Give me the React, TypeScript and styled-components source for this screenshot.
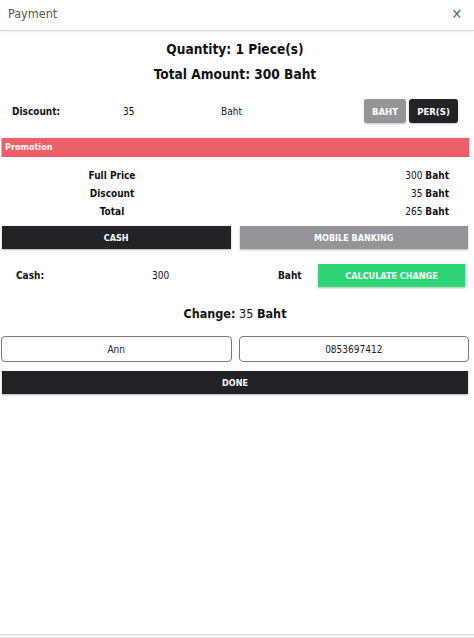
import React from 'react';
import styled, {createGlobalStyle} from 'styled-components';

// ==================== 全局样式 ====================

const GlobalStyle = createGlobalStyle`
  html, body {
    margin: 0;
    padding: 0;
    background: #ffffff;
  }
  body {
    font-family: "DejaVu Sans Condensed", "DejaVu Sans", sans-serif;
    color: #111;
  }
  * { box-sizing: border-box; }
`;

// ==================== 样式组件 ====================

const Modal = styled.div`
  display: flex;
  flex-direction: column;
  width: 474px;
  height: 638px;
  background: #fff;
`;

const Header = styled.div`
  display: flex;
  align-items: center;
  justify-content: space-between;
  height: 31px;
  padding: 0 12px 3px 8px;
  border-bottom: 1px solid #dcdcdc;
  box-shadow: 0 1px 2px rgba(0, 0, 0, 0.08);
`;

const HeaderTitle = styled.span`
  font-size: 12.5px;
  color: #555;
`;

const CloseButton = styled.span`
  font-size: 14px;
  font-weight: bold;
  color: #666;
  cursor: pointer;
`;

const Body = styled.div`
  flex: 1;
  display: flex;
  flex-direction: column;
  padding: 8px 5px 0 1px;
`;

const Heading = styled.div<{ $mt?: number }>`
  text-align: center;
  font-size: 13.6px;
  font-weight: bold;
  line-height: 20px;
  margin-top: ${p => p.$mt ?? 0}px;
`;

const DiscountRow = styled.div`
  display: grid;
  grid-template-columns: 111px 98px 1fr auto;
  align-items: center;
  margin-top: 15px;
  padding: 0 11px 0 11px;
  font-size: 10px;
`;

const Label = styled.span`
  font-weight: bold;
`;

const ToggleGroup = styled.div`
  display: flex;
  gap: 3px;
`;

const ToggleButton = styled.button<{ $active?: boolean; $w: number }>`
  width: ${p => p.$w}px;
  height: 24px;
  padding: 0;
  border: none;
  border-radius: 3px;
  font-family: inherit;
  font-size: 9.5px;
  font-weight: bold;
  color: #fff;
  background: ${p => p.$active ? '#222326' : '#939599'};
  box-shadow: 0 1px 2px rgba(0, 0, 0, 0.25);
`;

const PromotionBar = styled.div`
  margin-top: 15px;
  height: 19px;
  line-height: 19px;
  padding-left: 3px;
  background: #ee6068;
  color: #fff;
  font-size: 9px;
  font-weight: bold;
  border-left: 1px solid #f4a0a5;
`;

const SummaryTable = styled.div`
  display: grid;
  grid-template-columns: 222px 1fr;
  margin-top: 10px;
  padding-right: 20px;
  font-size: 10px;
  line-height: 18px;
`;

const SummaryLabel = styled.span`
  text-align: center;
  font-weight: bold;
`;

const SummaryValue = styled.span`
  text-align: right;
`;

const Unit = styled.b`
  font-weight: bold;
`;

const MethodRow = styled.div`
  display: grid;
  grid-template-columns: 1fr 1fr;
  column-gap: 9px;
  margin-top: 5px;
  padding: 0 1px 0 1px;
`;

const BlockButton = styled.button<{ $tone: 'dark' | 'gray' | 'green' }>`
  height: 23px;
  border: none;
  border-radius: 0;
  font-family: inherit;
  font-size: 9px;
  font-weight: bold;
  color: #fff;
  background: ${p => p.$tone === 'dark' ? '#222326' : p.$tone === 'gray' ? '#939599' : '#2ed574'};
  box-shadow: 0 1px 2px rgba(0, 0, 0, 0.3);
`;

const CashRow = styled.div`
  display: grid;
  grid-template-columns: 136px 126px 40px 1fr;
  align-items: center;
  margin-top: 15px;
  padding: 0 4px 0 15px;
  font-size: 10px;
`;

const ChangeLine = styled.div`
  text-align: center;
  font-size: 12.5px;
  margin-top: 19px;
`;

const InputRow = styled.div`
  display: grid;
  grid-template-columns: 1fr 1fr;
  column-gap: 7px;
  margin-top: 15px;
`;

const TextInput = styled.input`
  height: 26px;
  width: 100%;
  border: 1px solid #777;
  border-radius: 4px;
  text-align: center;
  font-family: inherit;
  font-size: 10px;
  color: #222;
  outline: none;
`;

const DoneButton = styled(BlockButton)`
  margin: 9px 1px 0 1px;
`;

const Footer = styled.div`
  height: 4px;
  border-top: 1px solid #dcdcdc;
  background: #f4f4f4;
`;

// ==================== 主组件 ====================

const App: React.FC = () => {
    return (
        <>
            <GlobalStyle/>
            <Modal>
                <Header>
                    <HeaderTitle>Payment</HeaderTitle>
                    <CloseButton>✕</CloseButton>
                </Header>
                <Body>
                    <Heading>Quantity: 1 Piece(s)</Heading>
                    <Heading $mt={5}>Total Amount: 300 Baht</Heading>

                    <DiscountRow>
                        <Label>Discount:</Label>
                        <span>35</span>
                        <span>Baht</span>
                        <ToggleGroup>
                            <ToggleButton $w={42}>BAHT</ToggleButton>
                            <ToggleButton $w={49} $active>PER(S)</ToggleButton>
                        </ToggleGroup>
                    </DiscountRow>

                    <PromotionBar>Promotion</PromotionBar>

                    <SummaryTable>
                        <SummaryLabel>Full Price</SummaryLabel>
                        <SummaryValue>300 <Unit>Baht</Unit></SummaryValue>
                        <SummaryLabel>Discount</SummaryLabel>
                        <SummaryValue>35 <Unit>Baht</Unit></SummaryValue>
                        <SummaryLabel>Total</SummaryLabel>
                        <SummaryValue>265 <Unit>Baht</Unit></SummaryValue>
                    </SummaryTable>

                    <MethodRow>
                        <BlockButton $tone="dark">CASH</BlockButton>
                        <BlockButton $tone="gray">MOBILE BANKING</BlockButton>
                    </MethodRow>

                    <CashRow>
                        <Label>Cash:</Label>
                        <span>300</span>
                        <Label>Baht</Label>
                        <BlockButton $tone="green">CALCULATE CHANGE</BlockButton>
                    </CashRow>

                    <ChangeLine><b>Change:</b> 35 <b>Baht</b></ChangeLine>

                    <InputRow>
                        <TextInput defaultValue="Ann"/>
                        <TextInput defaultValue="0853697412"/>
                    </InputRow>

                    <DoneButton $tone="dark">DONE</DoneButton>
                </Body>
                <Footer/>
            </Modal>
        </>
    );
};

export default App;
